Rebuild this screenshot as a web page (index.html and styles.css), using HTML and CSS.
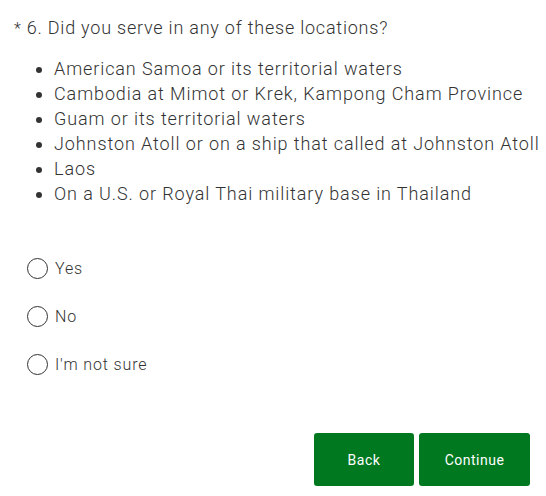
FILE: index.html
```html
<!DOCTYPE html>
<html lang="en">
<head>
<meta charset="utf-8">
<link rel="stylesheet" href="styles.css">
</head>
<body>
<div class="question">
  <h1 class="title"><span class="req">*</span> 6. Did you serve in any of these locations?</h1>
  <ul class="locations">
    <li>American Samoa or its territorial waters</li>
    <li>Cambodia at Mimot or Krek, Kampong Cham Province</li>
    <li>Guam or its territorial waters</li>
    <li>Johnston Atoll or on a ship that called at Johnston Atoll</li>
    <li>Laos</li>
    <li>On a U.S. or Royal Thai military base in Thailand</li>
  </ul>
  <div class="options">
    <label class="option"><span class="radio"></span><span class="label">Yes</span></label>
    <label class="option"><span class="radio"></span><span class="label">No</span></label>
    <label class="option"><span class="radio"></span><span class="label">I'm not sure</span></label>
  </div>
  <div class="actions">
    <button class="btn btn-back">Back</button>
    <button class="btn btn-continue">Continue</button>
  </div>
</div>
</body>
</html>
```
FILE: styles.css
```css
html, body {
  margin: 0;
  padding: 0;
  background: #ffffff;
}
body {
  font-family: "Roboto", "Liberation Sans", sans-serif;
  font-weight: 300;
  color: #333333;
  width: 546px;
  height: 496px;
  overflow: hidden;
}
.question {
  padding: 16px 0 0 14px;
}
.title {
  margin: 0;
  font-size: 18px;
  font-weight: 300;
  line-height: 24px;
  letter-spacing: 0.78px;
}
.req {
  font-size: 16px;
}
.locations {
  margin: 15px 0 0 0;
  padding: 0 0 0 40px;
  font-size: 18px;
  line-height: 25px;
  letter-spacing: 0.9px;
}
.options {
  margin-top: 50px;
  display: flex;
  flex-direction: column;
  gap: 24px;
  padding-left: 13px;
}
.option {
  display: flex;
  align-items: center;
  gap: 7px;
  height: 24px;
  font-size: 16px;
  letter-spacing: 0.85px;
}
.radio {
  width: 19px;
  height: 19px;
  border: 1.5px solid #333333;
  border-radius: 50%;
  box-sizing: content-box;
  flex: none;
}
.actions {
  margin-top: 57px;
  display: flex;
  justify-content: flex-end;
  gap: 5px;
  padding-right: 16px;
}
.btn {
  background: #00781f;
  color: #ffffff;
  border: none;
  border-radius: 3px;
  height: 53px;
  font-family: inherit;
  font-weight: 400;
  font-size: 14px;
  letter-spacing: 0.5px;
  padding: 0;
}
.btn-back {
  width: 100px;
}
.btn-continue {
  width: 111px;
}
```
